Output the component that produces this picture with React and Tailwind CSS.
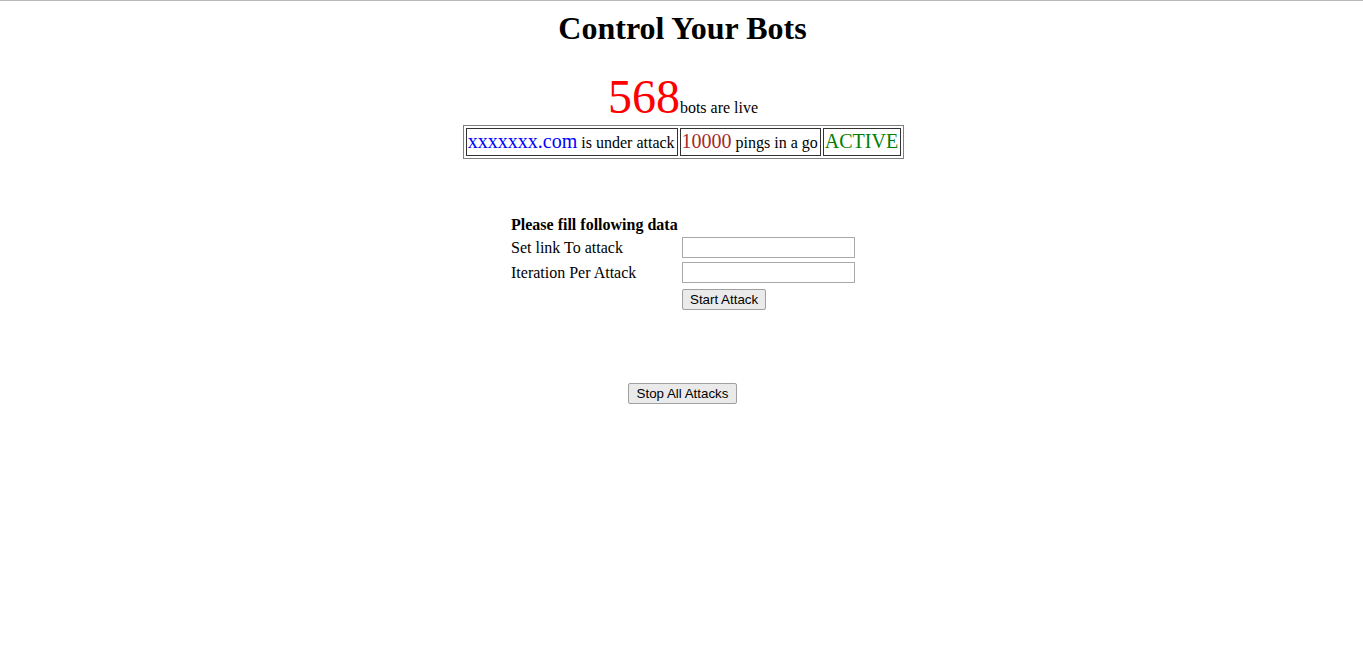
const App = () => {
    return (
        <div className="min-h-[656px] bg-white font-['Liberation_Serif',serif] text-black border-t border-[#b9b9b9]">
            <h1 className="pt-[9px] text-center text-[32px] font-bold leading-[37px] ml-[2px]">
                Control Your Bots
            </h1>

            <div className="mt-[22px] flex justify-center items-baseline ml-[3px]">
                <span className="text-[48px] leading-[55px] text-[#ff0000]">568</span>
                <span className="text-[16px]">bots are live</span>
            </div>

            <div className="mt-[1px] flex justify-center">
                <div className="flex gap-[2px] p-[2px] border border-[#808080] ml-[4px]">
                    <div className="flex items-baseline pl-[1px] pr-[2px] py-[1px] border border-[#333333] leading-[23px]">
                        <span className="text-[20px] text-[#0000ff]">xxxxxxx.com</span>
                        <span className="text-[16px] ml-[4px]">is under attack</span>
                    </div>
                    <div className="flex items-baseline pl-[1px] pr-[2px] py-[1px] border border-[#333333] leading-[23px]">
                        <span className="text-[20px] text-[#a52a2a]">10000</span>
                        <span className="text-[16px] ml-[4px]">pings in a go</span>
                    </div>
                    <div className="flex items-baseline pl-[1px] pr-[2px] py-[1px] border border-[#333333] leading-[23px]">
                        <span className="text-[20px] text-[#008000]">ACTIVE</span>
                    </div>
                </div>
            </div>

            <div className="mt-[57px] flex justify-center">
                <div className="grid grid-cols-[171px_173px] gap-y-[4px] text-[16px] ml-[3px]">
                    <div className="col-span-2 font-bold leading-[17px]">Please fill following data</div>
                    <div className="flex items-center h-[21px]">Set link To attack</div>
                    <input type="text" className="h-[21px] w-[173px] border border-[#a9a9a9] bg-white px-[2px] text-[13px] outline-none" />
                    <div className="flex items-center h-[21px]">Iteration Per Attack</div>
                    <input type="text" className="h-[21px] w-[173px] border border-[#a9a9a9] bg-white px-[2px] text-[13px] outline-none" />
                    <div></div>
                    <div className="flex mt-[2px]">
                        <button className="h-[21px] px-[7px] border border-[#a0a0a0] rounded-[2px] bg-[#eaeaea] font-['Liberation_Sans',sans-serif] text-[13.33px] leading-[18px]">
                            Start Attack
                        </button>
                    </div>
                </div>
            </div>

            <div className="mt-[73px] flex justify-center">
                <button className="h-[21px] px-[8px] border border-[#a0a0a0] rounded-[2px] bg-[#eaeaea] font-['Liberation_Sans',sans-serif] text-[13.33px] leading-[18px] ml-[2px]">
                    Stop All Attacks
                </button>
            </div>
        </div>
    );
}

export default App;
